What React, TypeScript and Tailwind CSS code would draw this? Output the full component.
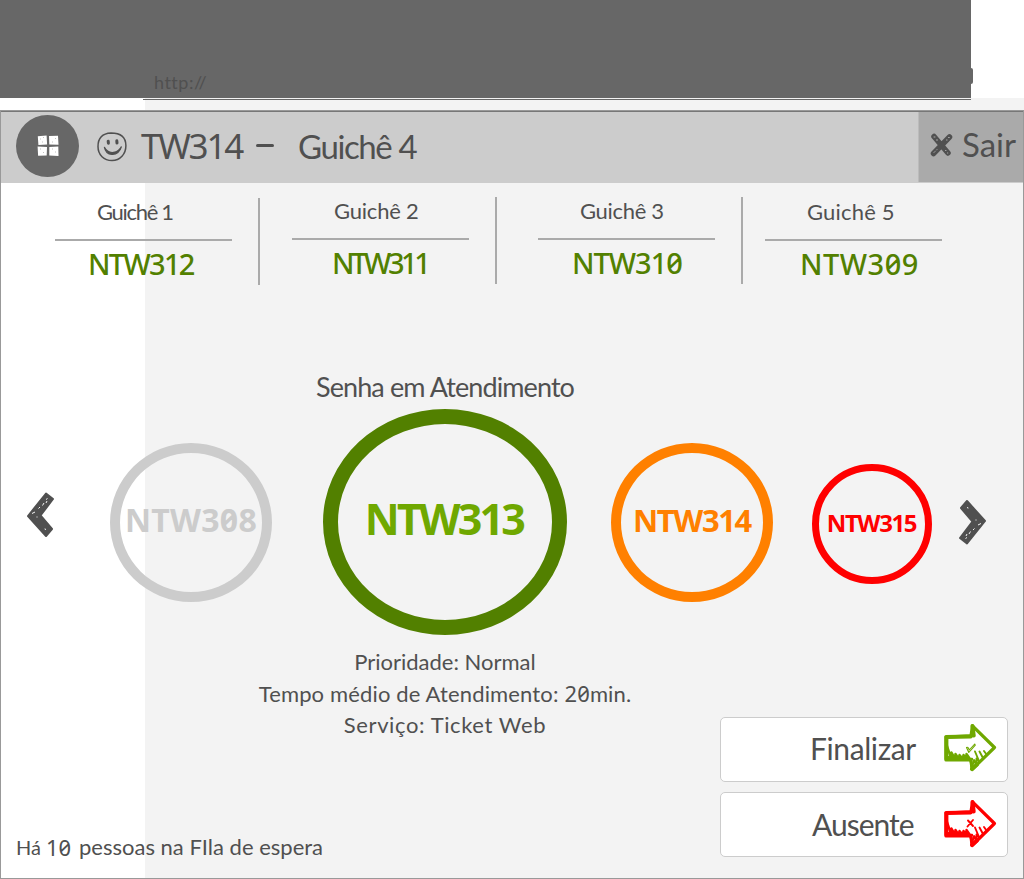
import React from "react";

const counters = [
  { name: "Guichê 1", code: "NTW312", col: "w-[257px] pl-[54px] pt-[15px]", nameCls: "ml-[42px] tracking-[-1.3px]", codeCls: "ml-[33px] tracking-[-1.7px]", sep: true, sepCls: "mt-[15px]" },
  { name: "Guichê 2", code: "NTW311", col: "w-[235px] pl-[32px] pt-[14px]", nameCls: "ml-[42px] tracking-[-0.2px]", codeCls: "ml-[40px] tracking-[-3.4px]", sep: true, sepCls: "mt-[14px]" },
  { name: "Guichê 3", code: "NTW310", col: "w-[244px] pl-[41px] pt-[14px]", nameCls: "ml-[42px] tracking-[-0.3px]", codeCls: "ml-[34px] tracking-[-1px]", sep: true, sepCls: "mt-[14px]" },
  { name: "Guichê 5", code: "NTW309", col: "w-[220px] pl-[22px] pt-[15px]", nameCls: "ml-[42px] tracking-[0.2px]", codeCls: "ml-[35px] tracking-[0.5px]", sep: false, sepCls: "" },
];

const tickets = [
  { code: "NTW308", box: "ml-[57px] mt-[34px] h-[159px] w-[162px] border-[10px] border-[#cccccc] text-[#cccccc]", text: "text-[32px] tracking-[0.3px] pb-[5px]" },
  { code: "NTW313", box: "ml-[51px] h-[226px] w-[244px] border-[15px] border-[#528000] text-[#6fa800]", text: "text-[43px] tracking-[-2.8px] pb-[7px] pr-[2px]" },
  { code: "NTW314", box: "ml-[44px] mt-[34px] h-[159px] w-[162px] border-[10px] border-[#ff8000] text-[#ff8000]", text: "text-[31px] tracking-[-1.4px] pb-[5px]" },
  { code: "NTW315", box: "ml-[39px] mt-[55px] h-[120px] w-[120px] border-[7px] border-[#ff0000] text-[#ff0000]", text: "text-[24px] tracking-[-1.4px] pb-[2px] pr-[1px]" },
];

function GridIcon() {
  return (
    <svg width="22" height="22" viewBox="0 0 22 22" fill="#fff">
      <path d="M.8 1.2 9.6.6l.5 9-8.7.3zM12 1l9-.2.5 9-9.200-.2zM.6 11.600l9.400.4-.3 8.400-8.600.4zM12.300 12l9-.4.2 9.300-9.200-.5z" />
      <path d="M3 4h1M6 2.500h1M5 7h1M15 7h1M18 3.500h1M3 14h1M6 17.500h1M15 14h1M18 17h1" stroke="#a8a8a8" strokeWidth=".7" />
    </svg>
  );
}

function SmileIcon() {
  return (
    <svg width="30" height="30" viewBox="0 0 30 30" fill="none" stroke="#505050" strokeLinecap="round">
      <path d="M14 1C6 1.400 1 6 1 14.500S7 28.600 15 28.600 29 22 28.900 13.500 24 1 14 1z" strokeWidth="1.500" />
      <path d="M11.200 9.200l.2 2M19.800 8.800l.2 2.200" strokeWidth="3" />
      <path d="M7.300 15c2 10.500 14 9.500 17.200-.5C21.500 20.500 12 24 7.300 15z" strokeWidth="1.200" fill="#505050" />
    </svg>
  );
}

function CrossIcon() {
  return (
    <svg width="23" height="24" viewBox="0 0 23 24" fill="none" strokeLinecap="round">
      <path d="M4 3.500 18 20M19.500 4 3.500 20.500" stroke="#505050" strokeWidth="5.500" />
      <path d="M4 4h1M6.500 7h1M18.500 4.500h.8M16.500 7h.6M4 19.500l1-1M6.500 17l.5-.5M15.500 17.500h.5M17.500 20h.3" stroke="#aaaaaa" strokeWidth="1" />
    </svg>
  );
}

function Chevron({ flip }: { flip?: boolean }) {
  return (
    <svg width="27" height="46" viewBox="0 0 27 46" className={flip ? "rotate-180" : ""}>
      <path d="M19 1.500 26 7 13.500 23.500 25 37l-6 7L1 24z" fill="#505050" stroke="#505050" strokeWidth="2" strokeLinejoin="round" />
      <path d="M19 7.500l1.500-1M17 11l-1.500 2.500M20 9l-1 2M13 15l-1.500 1.500M5 21.500l3-1.500M10 24.500v1M18 36.500l.5 1.500" stroke="#f5f5f5" strokeWidth="1" />
    </svg>
  );
}

function ArrowIcon({ kind }: { kind: "check" | "cross" }) {
  return (
    <svg width="54" height="50" viewBox="0 0 54 50" fill="none" stroke="currentColor" strokeLinejoin="round" strokeLinecap="round">
      <path d="M2 14 27 12.800 28.500 2.800 50.500 24.500 28 46.500 27 37H2z" strokeWidth="3.200" />
      <path d="M2.200 14l24.500-.6M2.400 14v22M28 46l5-4.500M28.500 3l1.200 9.500" strokeWidth="4" />
      <path d="M3 23l4 12 .5-5.500 3.500 6 .5-4.500 3 4.500 1-3.500 3 3.500 1-3.500 2.500 4 .5-5 3.500 5M4 36h24M5 34h18" strokeWidth="2.400" />
      <path d="M26 36.500l2 8.500 2-8 2 4.500.5-6 2.500 3.500M31 28.500l4 9.500M35.500 28.500l3.500 6.500M40 28l2.500 3.500" strokeWidth="1.900" />
      {kind === "check" ? (
        <path d="M22.500 24.500c1.500-1 2.300 1 2.700 2.500l5.500-6 .6 1.200-6.500 7.300z" strokeWidth="1.100" />
      ) : (
        <path d="M24 21.500l5 5.500M29 21l-5.500 6.500" strokeWidth="1.900" />
      )}
    </svg>
  );
}

export default function App() {
  return (
    <div className="flex h-[879px] w-[1024px] flex-col overflow-hidden bg-white font-['Lato',sans-serif] text-[#505050]">
      <div className="flex h-[98px]">
        <div className="w-[971px] bg-[#676767] pl-[154px] pt-[71px]">
          <div className="text-[18px] leading-[22px] tracking-[0.5px] text-[#505050]">http://</div>
        </div>
        <div className="mt-[68px] h-[16px] w-[2px] rounded-r-[2px] bg-[#676767]" />
      </div>
      <div className="h-[12px] bg-[linear-gradient(to_right,#fff_145px,#f3f3f3_145px)] pt-px">
        <div className="ml-[143px] h-px w-[828px] bg-[#676767]" />
      </div>

      <div className="flex h-[769px] flex-col border border-[#999999] bg-[linear-gradient(to_right,#fff_144px,#f3f3f3_144px)]">
        <header className="flex h-[72px] shrink-0 border-t border-[#777777] bg-[#cccccc]">
          <div className="ml-[15px] mt-[3px] flex h-[62px] w-[63px] items-center justify-center rounded-[50%] bg-[#676767]">
            <GridIcon />
          </div>
          <div className="ml-[18px] mt-[20px]">
            <SmileIcon />
          </div>
          <div className="flex pt-[14px] leading-[40px]">
            <span className="ml-[14px] w-[115px] font-['Noto_Sans',sans-serif] text-[35px] tracking-[-2.2px]">TW314</span>
            <span className="mt-[18px] h-[3px] w-[18px] rounded-full bg-[#505050]" />
            <span className="ml-[24px] whitespace-nowrap text-[33px] tracking-[-1.4px]">Guichê 4</span>
          </div>
          <div className="ml-auto flex h-[70px] w-[105px] border-l border-[#bbbbbb] bg-[#aaaaaa]">
            <div className="ml-[11px] mt-[21px]">
              <CrossIcon />
            </div>
            <span className="ml-[9px] mt-[12px] text-[33px] leading-[40px]">Sair</span>
          </div>
        </header>

        <section className="flex h-[102px] shrink-0">
          {counters.map((c) => (
            <React.Fragment key={c.code}>
              <div className={c.col}>
                <div className="h-[43px] w-[177px] whitespace-nowrap border-b-2 border-[#aaaaaa] text-[22px] leading-[28px]">
                  <div className={c.nameCls}>{c.name}</div>
                </div>
                <div className={`mt-[5px] whitespace-nowrap font-['Noto_Sans',sans-serif] text-[29px] font-medium leading-[36px] text-[#528000] slashed-zero ${c.codeCls}`}>
                  {c.code}
                </div>
              </div>
              {c.sep && <div className={`h-[87px] w-[2px] shrink-0 bg-[#aaaaaa] ${c.sepCls}`} />}
            </React.Fragment>
          ))}
        </section>

        <h1 className="ml-[315px] mt-[86px] shrink-0 whitespace-nowrap text-[27px] leading-[32px] tracking-[-0.9px]">
          Senha em Atendimento
        </h1>

        <section className="mt-[6px] flex h-[226px] shrink-0 items-start">
          <div className="ml-[26px] mt-[83px] w-[26px]">
            <Chevron />
          </div>
          {tickets.map((t) => (
            <div key={t.code} className={`flex shrink-0 items-center justify-center rounded-[50%] ${t.box}`}>
              <span className={`font-['Noto_Sans',sans-serif] font-bold leading-none slashed-zero ${t.text}`}>{t.code}</span>
            </div>
          ))}
          <div className="ml-[27px] mt-[90px]">
            <Chevron flip />
          </div>
        </section>

        <section className="flex flex-1">
          <div className="flex w-[719px] flex-col">
            <div className="whitespace-nowrap pl-[169px] pt-[11px] text-center text-[22px] leading-[31.5px]">
              <p>Prioridade: Normal</p>
              <p className="tracking-[0.15px]">
                Tempo médio de Atendimento: <span className="font-['Noto_Sans',sans-serif] slashed-zero">20</span>min.
              </p>
              <p className="tracking-[0.6px]">Serviço: Ticket Web</p>
            </div>
            <p className="mb-[17px] mt-auto flex pl-[15px] text-[22px] leading-[28px]">
              <span className="w-[30px] text-[20px]">Há</span>
              <span className="w-[33px] font-['Noto_Sans',sans-serif] slashed-zero">10</span>
              <span>pessoas na FIla de espera</span>
            </p>
          </div>
          <div className="flex flex-col gap-[10px] pt-[82px]">
            <button className="flex h-[65px] w-[288px] rounded-[5px] border border-[#cccccc] bg-white text-left">
              <span className="ml-[89px] mt-[10px] w-[134px] text-[30px] leading-[40px] tracking-[-0.4px]">Finalizar</span>
              <span className="mt-[5px] text-[#6fa800]">
                <ArrowIcon kind="check" />
              </span>
            </button>
            <button className="flex h-[65px] w-[288px] rounded-[5px] border border-[#cccccc] bg-white text-left">
              <span className="ml-[91px] mt-[11px] w-[132px] text-[30px] leading-[40px] tracking-[-1px]">Ausente</span>
              <span className="mt-[6px] text-[#ff0000]">
                <ArrowIcon kind="cross" />
              </span>
            </button>
          </div>
        </section>
      </div>
    </div>
  );
}
